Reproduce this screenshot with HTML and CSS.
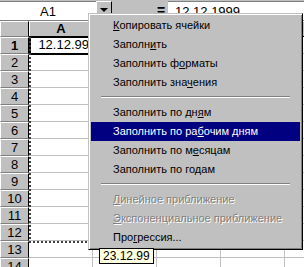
FILE: index.html
```html
<!DOCTYPE html>
<html lang="ru">
<head>
  <meta charset="UTF-8">
  <title>Автозаполнение</title>
  <link rel="stylesheet" href="styles.css">
</head>
<body>
  <div class="excel">
    <div class="formula-bar">
      <div class="name-box">A1</div>
      <div class="name-drop"><span class="arrow"></span></div>
      <div class="equals">=</div>
      <div class="formula-input">12.12.1999</div>
    </div>

    <div class="sheet">
      <div class="row head-row">
        <div class="corner"></div>
        <div class="col-head active">A</div>
        <div class="col-head">B</div>
        <div class="col-head">C</div>
        <div class="col-head">D</div>
        <div class="col-head">E</div>
      </div>
      <div class="row"><div class="row-head active">1</div><div class="cell value">12.12.99</div><div class="cell"></div><div class="cell"></div><div class="cell"></div><div class="cell"></div></div>
      <div class="row"><div class="row-head">2</div><div class="cell"></div><div class="cell"></div><div class="cell"></div><div class="cell"></div><div class="cell"></div></div>
      <div class="row"><div class="row-head">3</div><div class="cell"></div><div class="cell"></div><div class="cell"></div><div class="cell"></div><div class="cell"></div></div>
      <div class="row"><div class="row-head">4</div><div class="cell"></div><div class="cell"></div><div class="cell"></div><div class="cell"></div><div class="cell"></div></div>
      <div class="row"><div class="row-head">5</div><div class="cell"></div><div class="cell"></div><div class="cell"></div><div class="cell"></div><div class="cell"></div></div>
      <div class="row"><div class="row-head">6</div><div class="cell"></div><div class="cell"></div><div class="cell"></div><div class="cell"></div><div class="cell"></div></div>
      <div class="row"><div class="row-head">7</div><div class="cell"></div><div class="cell"></div><div class="cell"></div><div class="cell"></div><div class="cell"></div></div>
      <div class="row"><div class="row-head">8</div><div class="cell"></div><div class="cell"></div><div class="cell"></div><div class="cell"></div><div class="cell"></div></div>
      <div class="row"><div class="row-head">9</div><div class="cell"></div><div class="cell"></div><div class="cell"></div><div class="cell"></div><div class="cell"></div></div>
      <div class="row"><div class="row-head">10</div><div class="cell"></div><div class="cell"></div><div class="cell"></div><div class="cell"></div><div class="cell"></div></div>
      <div class="row"><div class="row-head">11</div><div class="cell"></div><div class="cell"></div><div class="cell"></div><div class="cell"></div><div class="cell"></div></div>
      <div class="row"><div class="row-head">12</div><div class="cell"></div><div class="cell"></div><div class="cell"></div><div class="cell"></div><div class="cell"></div></div>
      <div class="row"><div class="row-head">13</div><div class="cell"></div><div class="cell"></div><div class="cell"></div><div class="cell"></div><div class="cell"></div></div>
      <div class="row"><div class="row-head">14</div><div class="cell"></div><div class="cell"></div><div class="cell"></div><div class="cell"></div><div class="cell"></div></div>
    </div>

    <!-- drag range A1:A12 and the active cell -->
    <div class="active-cell"></div>
    <div class="fill-range"></div>

    <div class="context-menu">
      <div class="menu-item"><u>К</u>опировать ячейки</div>
      <div class="menu-item">Заполн<u>и</u>ть</div>
      <div class="menu-item">Заполнить ф<u>о</u>рматы</div>
      <div class="menu-item">Заполнить зна<u>ч</u>ения</div>
      <div class="menu-sep"></div>
      <div class="menu-item">Заполнить по дн<u>я</u>м</div>
      <div class="menu-item selected">Заполнить по ра<u>б</u>очим дням</div>
      <div class="menu-item">Заполнить по м<u>е</u>сяцам</div>
      <div class="menu-item">Заполнить по го<u>д</u>ам</div>
      <div class="menu-sep"></div>
      <div class="menu-item disabled"><u>Л</u>инейное приближение</div>
      <div class="menu-item disabled"><u>Э</u>кспоненциальное приближение</div>
      <div class="menu-item">Про<u>г</u>рессия...</div>
    </div>

    <div class="tip">23.12.99</div>
  </div>
</body>
</html>
```

FILE: styles.css
```css
html, body {
  margin: 0;
  padding: 0;
  width: 100%;
  height: 100%;
  overflow: hidden;
  background: #fff;
}

.excel {
  position: relative;
  width: 304px;
  height: 267px;
  overflow: hidden;
  font-family: "Liberation Sans", Arial, sans-serif;
  color: #000;
}

/* formula bar */
.formula-bar {
  display: flex;
  align-items: center;
  height: 21px;
  background: #c0c0c0;
  box-sizing: border-box;
  border-bottom: 1px solid #808080;
}

.name-box {
  width: 96px;
  height: 19px;
  background: #fff;
  text-align: center;
  font-size: 13px;
  line-height: 19px;
  box-sizing: border-box;
  border-top: 1px solid #808080;
}

.name-drop {
  width: 16px;
  height: 19px;
  box-sizing: border-box;
  border: 1px solid;
  border-color: #fff #000 #000 #fff;
  background: #c0c0c0;
  display: flex;
  align-items: center;
  justify-content: center;
}

.arrow {
  width: 0;
  height: 0;
  border-left: 4px solid transparent;
  border-right: 4px solid transparent;
  border-top: 4px solid #000;
}

.equals {
  width: 12px;
  margin-left: 43px;
  text-align: center;
  font-size: 14px;
  font-weight: bold;
  line-height: 19px;
}

.formula-input {
  flex: 1;
  margin-left: 1px;
  height: 19px;
  background: #fff;
  font-size: 13px;
  line-height: 19px;
  padding-left: 7px;
  box-sizing: border-box;
  border-top: 1px solid #808080;
}

/* sheet grid */
.sheet {
  display: flex;
  flex-direction: column;
}

.row {
  display: flex;
  height: 17px;
  flex-shrink: 0;
}

.head-row {
  height: 16px;
}

.corner,
.row-head,
.col-head {
  box-sizing: border-box;
  background: #c0c0c0;
  border: 1px solid;
  border-color: #fff #808080 #808080 #fff;
  font-size: 13px;
  text-align: center;
  flex-shrink: 0;
}

.corner {
  width: 29px;
  border-right-color: #000;
}

.row-head {
  width: 29px;
  line-height: 15px;
  border-right-color: #000;
}

.col-head {
  width: 64px;
  line-height: 14px;
  border-bottom-color: #000;
}

.row-head.active,
.col-head.active {
  font-weight: bold;
}

.cell {
  width: 64px;
  flex-shrink: 0;
  box-sizing: border-box;
  border-right: 1px solid #c0c0c0;
  border-bottom: 1px solid #c0c0c0;
  font-size: 13px;
  line-height: 16px;
}

.cell.value {
  padding-right: 3px;
  text-align: right;
  white-space: nowrap;
}

/* selection */
.active-cell {
  position: absolute;
  left: 29px;
  top: 36px;
  width: 64px;
  height: 19px;
  box-sizing: border-box;
  border: 2px solid #000;
}

.fill-range {
  position: absolute;
  left: 29px;
  top: 37px;
  width: 90px;
  height: 206px;
  box-sizing: border-box;
  border-left: 2px dotted #404040;
  border-bottom: 2px dotted #404040;
}

/* context menu */
.context-menu {
  position: absolute;
  left: 88px;
  top: 13px;
  width: 215px;
  box-sizing: border-box;
  background: #c0c0c0;
  border: 1px solid;
  border-color: #c0c0c0 #000 #000 #c0c0c0;
  box-shadow: inset 1px 1px 0 #fff, inset -1px -1px 0 #808080;
  padding: 2px;
  font-size: 11px;
}

.menu-item {
  height: 19px;
  line-height: 19px;
  padding-left: 22px;
  white-space: nowrap;
}

.menu-item u {
  text-underline-offset: 1px;
}

.menu-item.selected {
  background: #000080;
  color: #fff;
}

.menu-item.disabled {
  color: #808080;
  text-shadow: 1px 1px 0 #fff;
}

.menu-sep {
  height: 0;
  margin: 4px 10px 5px 10px;
  border-top: 1px solid #808080;
  border-bottom: 1px solid #fff;
}

/* tooltip */
.tip {
  position: absolute;
  left: 99px;
  top: 248px;
  height: 16px;
  box-sizing: border-box;
  padding: 0 3px;
  border: 1px solid #000;
  background: #ffffe1;
  font-size: 12px;
  line-height: 14px;
}
```
